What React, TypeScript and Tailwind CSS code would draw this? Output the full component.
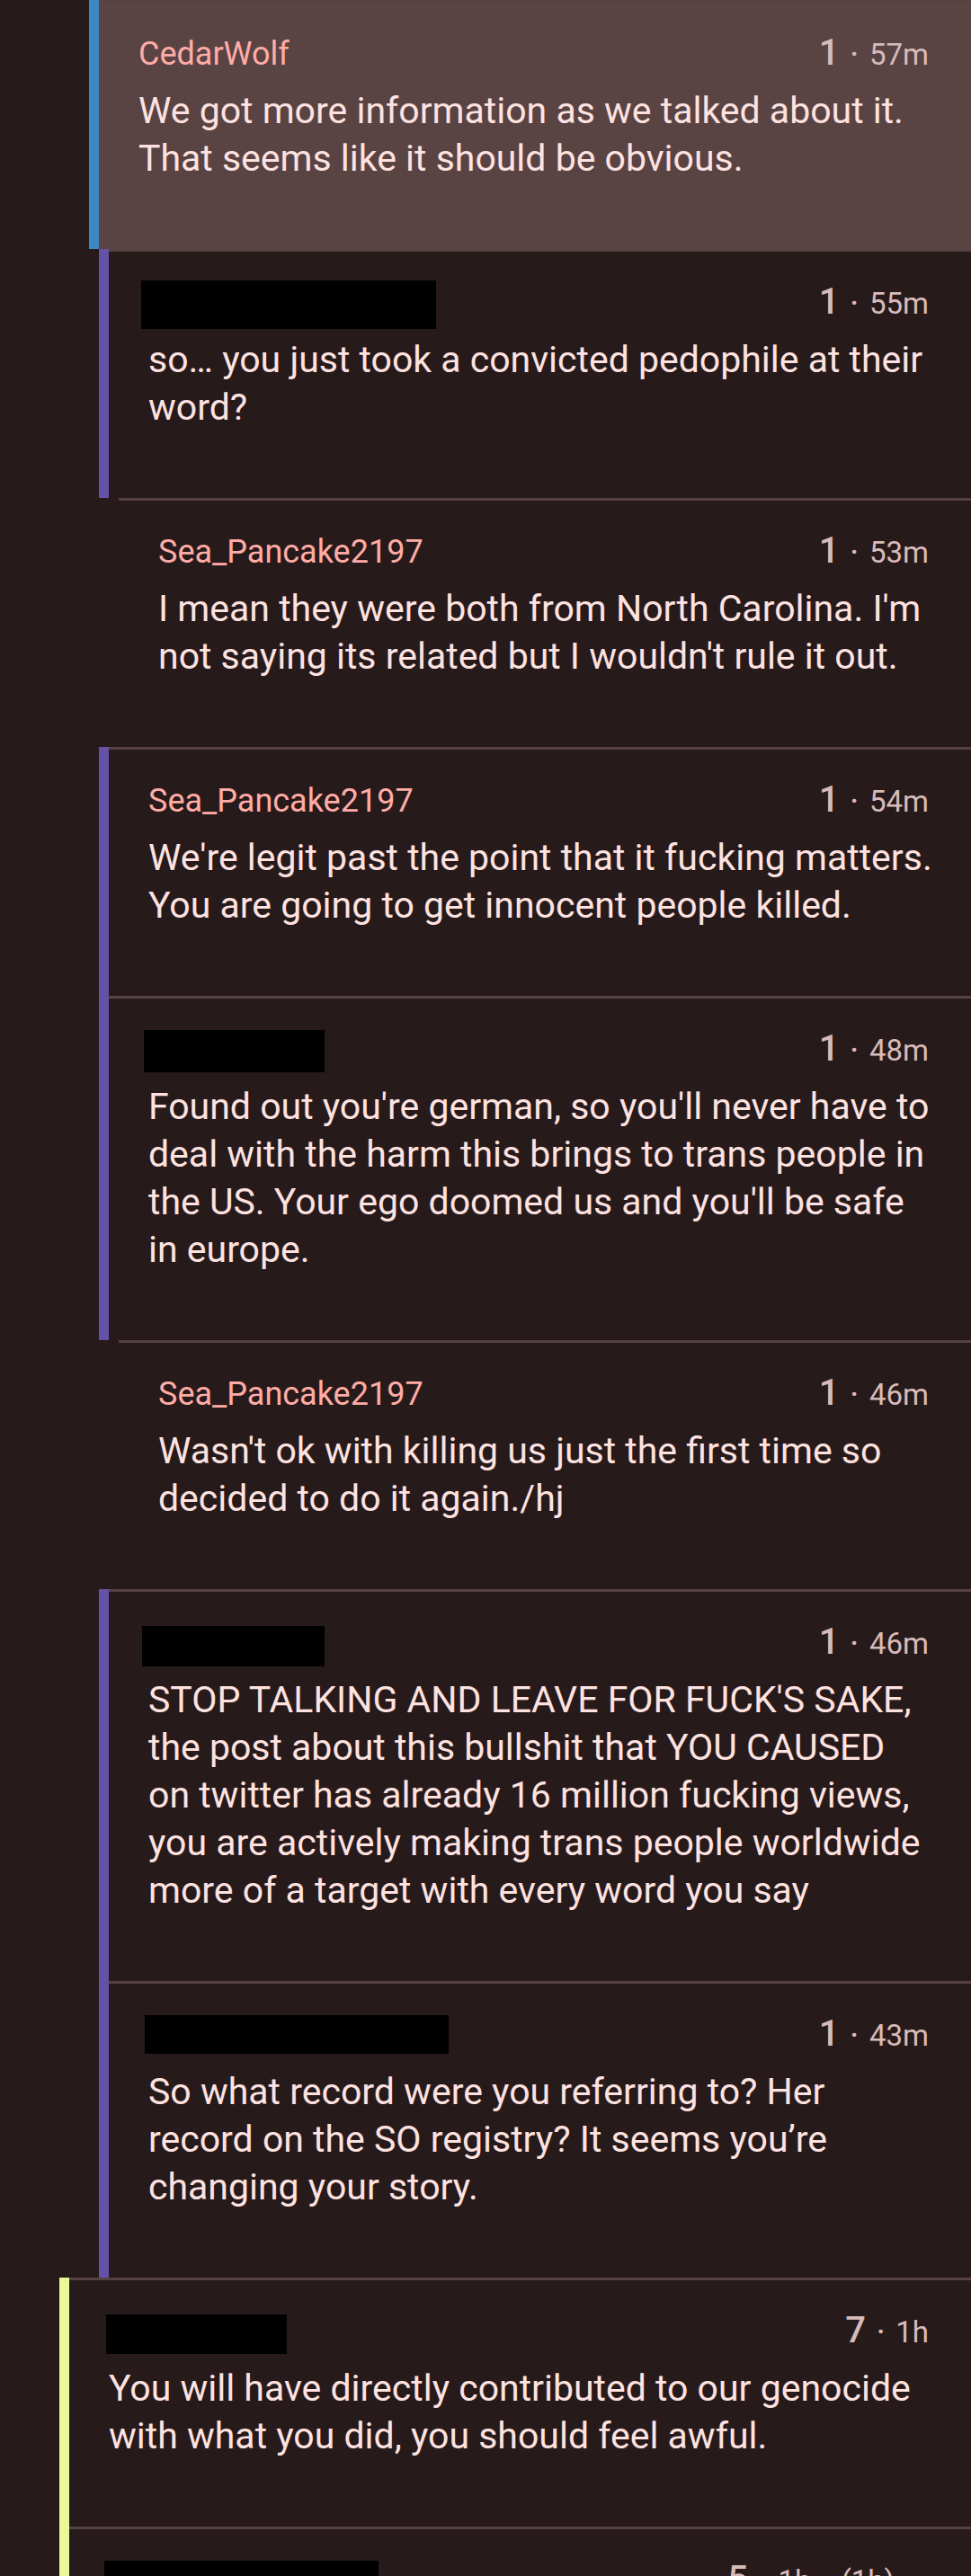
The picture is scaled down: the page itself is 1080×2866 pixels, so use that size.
import React from 'react';
import { Pencil } from 'lucide-react';

type Comment = {
  indent: string; // margin for thread depth
  bar: string; // depth colour
  highlight?: boolean;
  name?: string;
  redact?: string; // box drawn over the username
  score: string;
  time: string[];
  lines: string[];
  edited?: boolean;
};

const comments: Comment[] = [
  {
    indent: 'ml-[99px]',
    bar: 'bg-[#3b88c3]',
    highlight: true,
    name: 'CedarWolf',
    score: '1',
    time: ['57m'],
    lines: ['We got more information as we talked about it.', 'That seems like it should be obvious.'],
  },
  {
    indent: 'ml-[110px]',
    bar: 'bg-[#6452a8]',
    redact: 'w-[328px] h-[54px] -mt-[2px] -ml-[8px]',
    score: '1',
    time: ['55m'],
    lines: ['so… you just took a convicted pedophile at their', 'word?'],
  },
  {
    indent: 'ml-[121px]',
    bar: 'bg-transparent',
    name: 'Sea_Pancake2197',
    score: '1',
    time: ['53m'],
    lines: ["I mean they were both from North Carolina. I'm", "not saying its related but I wouldn't rule it out."],
  },
  {
    indent: 'ml-[110px]',
    bar: 'bg-[#6452a8]',
    name: 'Sea_Pancake2197',
    score: '1',
    time: ['54m'],
    lines: ["We're legit past the point that it fucking matters.", 'You are going to get innocent people killed.'],
  },
  {
    indent: 'ml-[110px]',
    bar: 'bg-[#6452a8]',
    redact: 'w-[201px] h-[47px] mt-[1px] -ml-[5px]',
    score: '1',
    time: ['48m'],
    lines: [
      "Found out you're german, so you'll never have to",
      'deal with the harm this brings to trans people in',
      "the US. Your ego doomed us and you'll be safe",
      'in europe.',
    ],
  },
  {
    indent: 'ml-[121px]',
    bar: 'bg-transparent',
    name: 'Sea_Pancake2197',
    score: '1',
    time: ['46m'],
    lines: ["Wasn't ok with killing us just the first time so", 'decided to do it again./hj'],
  },
  {
    indent: 'ml-[110px]',
    bar: 'bg-[#6452a8]',
    redact: 'w-[203px] h-[45px] mt-[4px] -ml-[7px]',
    score: '1',
    time: ['46m'],
    lines: [
      "STOP TALKING AND LEAVE FOR FUCK'S SAKE,",
      'the post about this bullshit that YOU CAUSED',
      'on twitter has already 16 million fucking views,',
      'you are actively making trans people worldwide',
      'more of a target with every word you say',
    ],
  },
  {
    indent: 'ml-[110px]',
    bar: 'bg-[#6452a8]',
    redact: 'w-[338px] h-[43px] mt-[1px] -ml-[4px]',
    score: '1',
    time: ['43m'],
    lines: ['So what record were you referring to? Her', 'record on the SO registry? It seems you’re', 'changing your story.'],
  },
  {
    indent: 'ml-[66px]',
    bar: 'bg-[#eaf69a]',
    redact: 'w-[201px] h-[44px] mt-[4px] -ml-[3px]',
    score: '7',
    time: ['1h'],
    lines: ['You will have directly contributed to our genocide', 'with what you did, you should feel awful.'],
  },
  {
    indent: 'ml-[66px]',
    bar: 'bg-[#eaf69a]',
    redact: 'w-[305px] h-[45px] mt-[1px] -ml-[5px]',
    score: '5',
    time: ['1h', '(1h)'],
    lines: [],
    edited: true,
  },
];

function CommentRow({ c }: { c: Comment }) {
  return (
    <div className={`flex ${c.indent}`}>
      <div className={`w-[11px] shrink-0 ${c.bar}`} />
      <div
        className={`flex-1 min-w-0 border-t-[3px] border-[#574242] pt-[34px] pb-[74px] pl-[44px] pr-[47px] ${
          c.highlight ? 'bg-[#5a4343]' : ''
        }`}
      >
        <div className="flex items-baseline justify-between h-[46px]">
          {c.name ? (
            <span className="text-[36px] leading-[44px] text-[#ffaca6]">{c.name}</span>
          ) : (
            <div className={`self-start bg-black ${c.redact}`} />
          )}
          <div className="flex items-baseline gap-[12px] text-[#d7bbbb]">
            <span className="text-[40px] leading-[44px] font-medium">{c.score}</span>
            {c.time.map((t) => (
              <React.Fragment key={t}>
                <span className="text-[33px] leading-[44px] font-medium">·</span>
                <span className="text-[33px] leading-[44px]">{t}</span>
              </React.Fragment>
            ))}
            {c.edited && <Pencil className="w-[26px] h-[26px] self-end" strokeWidth={2} />}
          </div>
        </div>
        {c.lines.length > 0 && (
          <p className="mt-[14px] text-[41px] leading-[53px] text-[#fde2e0] whitespace-nowrap">
            {c.lines.map((l, i) => (
              <React.Fragment key={i}>
                {i > 0 && <br />}
                {l}
              </React.Fragment>
            ))}
          </p>
        )}
      </div>
    </div>
  );
}

export default function App() {
  return (
    <div className="w-[1080px] h-[2866px] overflow-hidden bg-[#271a1a] font-['Roboto',sans-serif]">
      {comments.map((c, i) => (
        <CommentRow key={i} c={c} />
      ))}
    </div>
  );
}
